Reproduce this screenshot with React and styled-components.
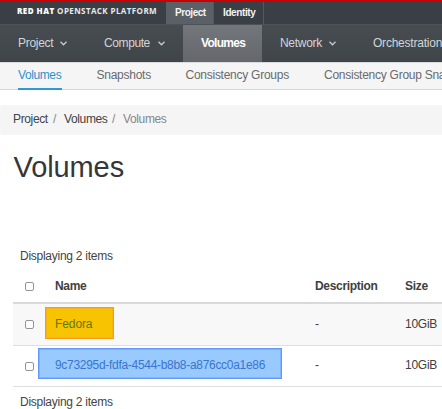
import React from 'react';
import styled, { createGlobalStyle } from 'styled-components';

const Global = createGlobalStyle`
  * { box-sizing: border-box; }
  body {
    margin: 0; width: 442px; height: 409px; overflow: hidden;
    background: #fff; color: #404040;
    font: 12px/16px "Liberation Sans", Arial, sans-serif;
    letter-spacing: -0.26px;
  }
`;
const Page = styled.div`width: 442px; height: 409px; overflow: hidden; white-space: nowrap;`;
const TopBar = styled.header`
  display: flex; height: 24px; border-top: 2px solid #cc0000; background: #393f45;
`;
const Brand = styled.div`
  width: 166px; padding-left: 17px; color: #fff;
  font: 800 8px/18px "Open Sans", sans-serif; letter-spacing: 0.45px;
`;
const BrandLight = styled.span`font-weight: 700; color: #e8e9ea; letter-spacing: 0.4px;`;
const TopTab = styled.a`
  width: ${p => p.$width}px; height: 22px; padding-left: 9px; line-height: 21px;
  font-size: 10px; font-weight: 700; letter-spacing: ${p => p.$spacing || 0}px; color: #f3f3f3;
  background: ${p => (p.$active ? '#5a6065' : 'transparent')};
  border-right: 1px solid #53585d;
`;
const MainNav = styled.nav`
  display: flex; height: 38px; background: linear-gradient(#474c50, #3f4549);
  border-top: 1px solid #4d5257;
`;
const NavItem = styled.a`
  display: flex; flex: none; align-items: center; gap: 7px; width: ${p => p.$width}px; padding: 0 0 1px 18px;
  color: ${p => (p.$active ? '#fff' : '#d3d5d6')}; font-size: 12px;
  font-weight: ${p => (p.$active ? 700 : 400)};
  background: ${p => (p.$active ? 'linear-gradient(#73767a, #64676b)' : 'transparent')};
  letter-spacing: ${p => p.$spacing ?? -0.26}px;
`;
const SubNav = styled.nav`
  display: flex; gap: 35px; height: 28px; padding-left: 18px; background: #f5f5f5;
  border-top: 1px solid #dcdcdc; border-bottom: 1px solid #d6d6d6;
`;
const SubItem = styled.a`
  flex: none; width: ${p => p.$width}px; height: 27px; line-height: 25px;
  letter-spacing: ${p => p.$spacing ?? -0.26}px;
  color: ${p => (p.$active ? '#2b92ca' : '#686b6e')};
  border-bottom: ${p => (p.$active ? '2px solid #2b9bd7' : '0')};
`;
const Breadcrumb = styled.div`
  display: flex; align-items: center; height: 30px; margin-top: 15px; padding: 0 0 2px 13px;
  background: #f5f5f5; border-radius: 3px 0 0 3px;
`;
const Crumb = styled.span`
  width: ${p => p.$width}px; color: ${p => (p.$muted ? '#85878a' : '#404347')};
  letter-spacing: -0.36px;
`;
const Title = styled.h1`
  margin: 12px 0 0 13.5px; height: 40px; font-size: 29px; line-height: 40px; font-weight: 400;
  letter-spacing: -0.1px; color: #363636;
`;
const Count = styled.div`height: 16px; margin: ${p => p.$top}px 0 0 20px; color: #444;`;
const Table = styled.div`margin: 2px 0 0 13px;`;
const Row = styled.div`
  display: grid; grid-template-columns: 42px 260px 90px 37px; align-items: center;
  height: ${p => p.$height}px; background: ${p => (p.$shade ? '#f8f8f8' : '#fff')};
  border-bottom: ${p => (p.$head ? '2px solid #d9d9d9' : '1px solid #dedede')};
  font-weight: ${p => (p.$head ? 700 : 400)};
  letter-spacing: ${p => (p.$head ? -0.32 : -0.26)}px;
`;
const Cell = styled.span`padding-bottom: 2px;`;
const HeadCell = styled.span`padding-top: 4px;`;
const Check = styled.input.attrs({ type: 'checkbox' })`
  appearance: none; width: 9px; height: 9px; margin: 0 0 0 12px; background: #fff;
  border: 1px solid #949494; border-radius: 2px;
`;
const HeadCheck = styled(Check)`margin-top: 4px;`;
const Highlight = styled.a`
  display: block; width: ${p => p.$width}px; height: ${p => p.$height}px;
  margin: 0 0 ${p => p.$lift * 2}px ${p => p.$left}px; padding-left: ${p => -p.$left - 1}px;
  line-height: ${p => p.$height + 1}px; border: 1px solid;
  background: ${p => (p.$tone === 'gold' ? '#f8c300' : '#99caff')};
  border-color: ${p => (p.$tone === 'gold' ? '#f99a22' : '#6299f8')};
  box-shadow: inset 0 0 0 1px ${p => (p.$tone === 'gold' ? '#f8b30f' : '#80b3ff')};
  color: ${p => (p.$tone === 'gold' ? '#63780b' : '#3975cb')};
  letter-spacing: ${p => p.$spacing || 0}px;
`;
const Arrow = styled.svg`
  width: 7px; height: 5px; margin-left: ${p => p.$shift || 0}px; fill: none; stroke: #c9cbcd; stroke-width: 1.3;
`;
const Chevron = ({ shift }) => <Arrow $shift={shift} viewBox="0 0 7 5"><path d="M.5.8 3.5 3.8 6.5.8" /></Arrow>;

export default function App() {
  return (
    <Page>
      <Global />
      <TopBar>
        <Brand>RED HAT <BrandLight>OPENSTACK PLATFORM</BrandLight></Brand>
        <TopTab $width={48} $active $spacing={-0.45}>Project</TopTab>
        <TopTab $width={50} $spacing={-0.4}>Identity</TopTab>
      </TopBar>
      <MainNav>
        <NavItem $width={86} $spacing={-0.3}>Project<Chevron /></NavItem>
        <NavItem $width={97} $spacing={-0.4}>Compute<Chevron shift={1} /></NavItem>
        <NavItem $width={79} $spacing={-0.7} $active>Volumes</NavItem>
        <NavItem $width={93} $spacing={-0.3}>Network<Chevron /></NavItem>
        <NavItem $width={100} $spacing={-0.22}>Orchestration</NavItem>
      </MainNav>
      <SubNav>
        <SubItem $width={43.5} $spacing={-0.4} $active>Volumes</SubItem>
        <SubItem $width={54}>Snapshots</SubItem>
        <SubItem $width={103.5}>Consistency Groups</SubItem>
        <SubItem $width={154} $spacing={-0.26}>Consistency Group Snapshots</SubItem>
      </SubNav>
      <Breadcrumb>
        <Crumb $width={40}>Project</Crumb><Crumb $width={11} $muted>/</Crumb>
        <Crumb $width={48}>Volumes</Crumb><Crumb $width={11} $muted>/</Crumb>
        <Crumb $width={50} $muted>Volumes</Crumb>
      </Breadcrumb>
      <Title>Volumes</Title>
      <Count $top={61}>Displaying 2 items</Count>
      <Table>
        <Row $height={38} $head><HeadCheck /><HeadCell>Name</HeadCell><HeadCell>Description</HeadCell><HeadCell>Size</HeadCell></Row>
        <Row $height={42} $shade>
          <Check /><Highlight $tone="gold" $left={-10} $width={69} $height={32} $lift={2} $spacing={-0.1}>Fedora</Highlight><Cell>-</Cell><Cell>10GiB</Cell>
        </Row>
        <Row $height={41}>
          <Check /><Highlight $left={-17} $width={244} $height={31} $lift={3} $spacing={-0.3}>9c73295d-fdfa-4544-b8b8-a876cc0a1e86</Highlight><Cell>-</Cell><Cell>10GiB</Cell>
        </Row>
      </Table>
      <Count $top={7}>Displaying 2 items</Count>
    </Page>
  );
}
